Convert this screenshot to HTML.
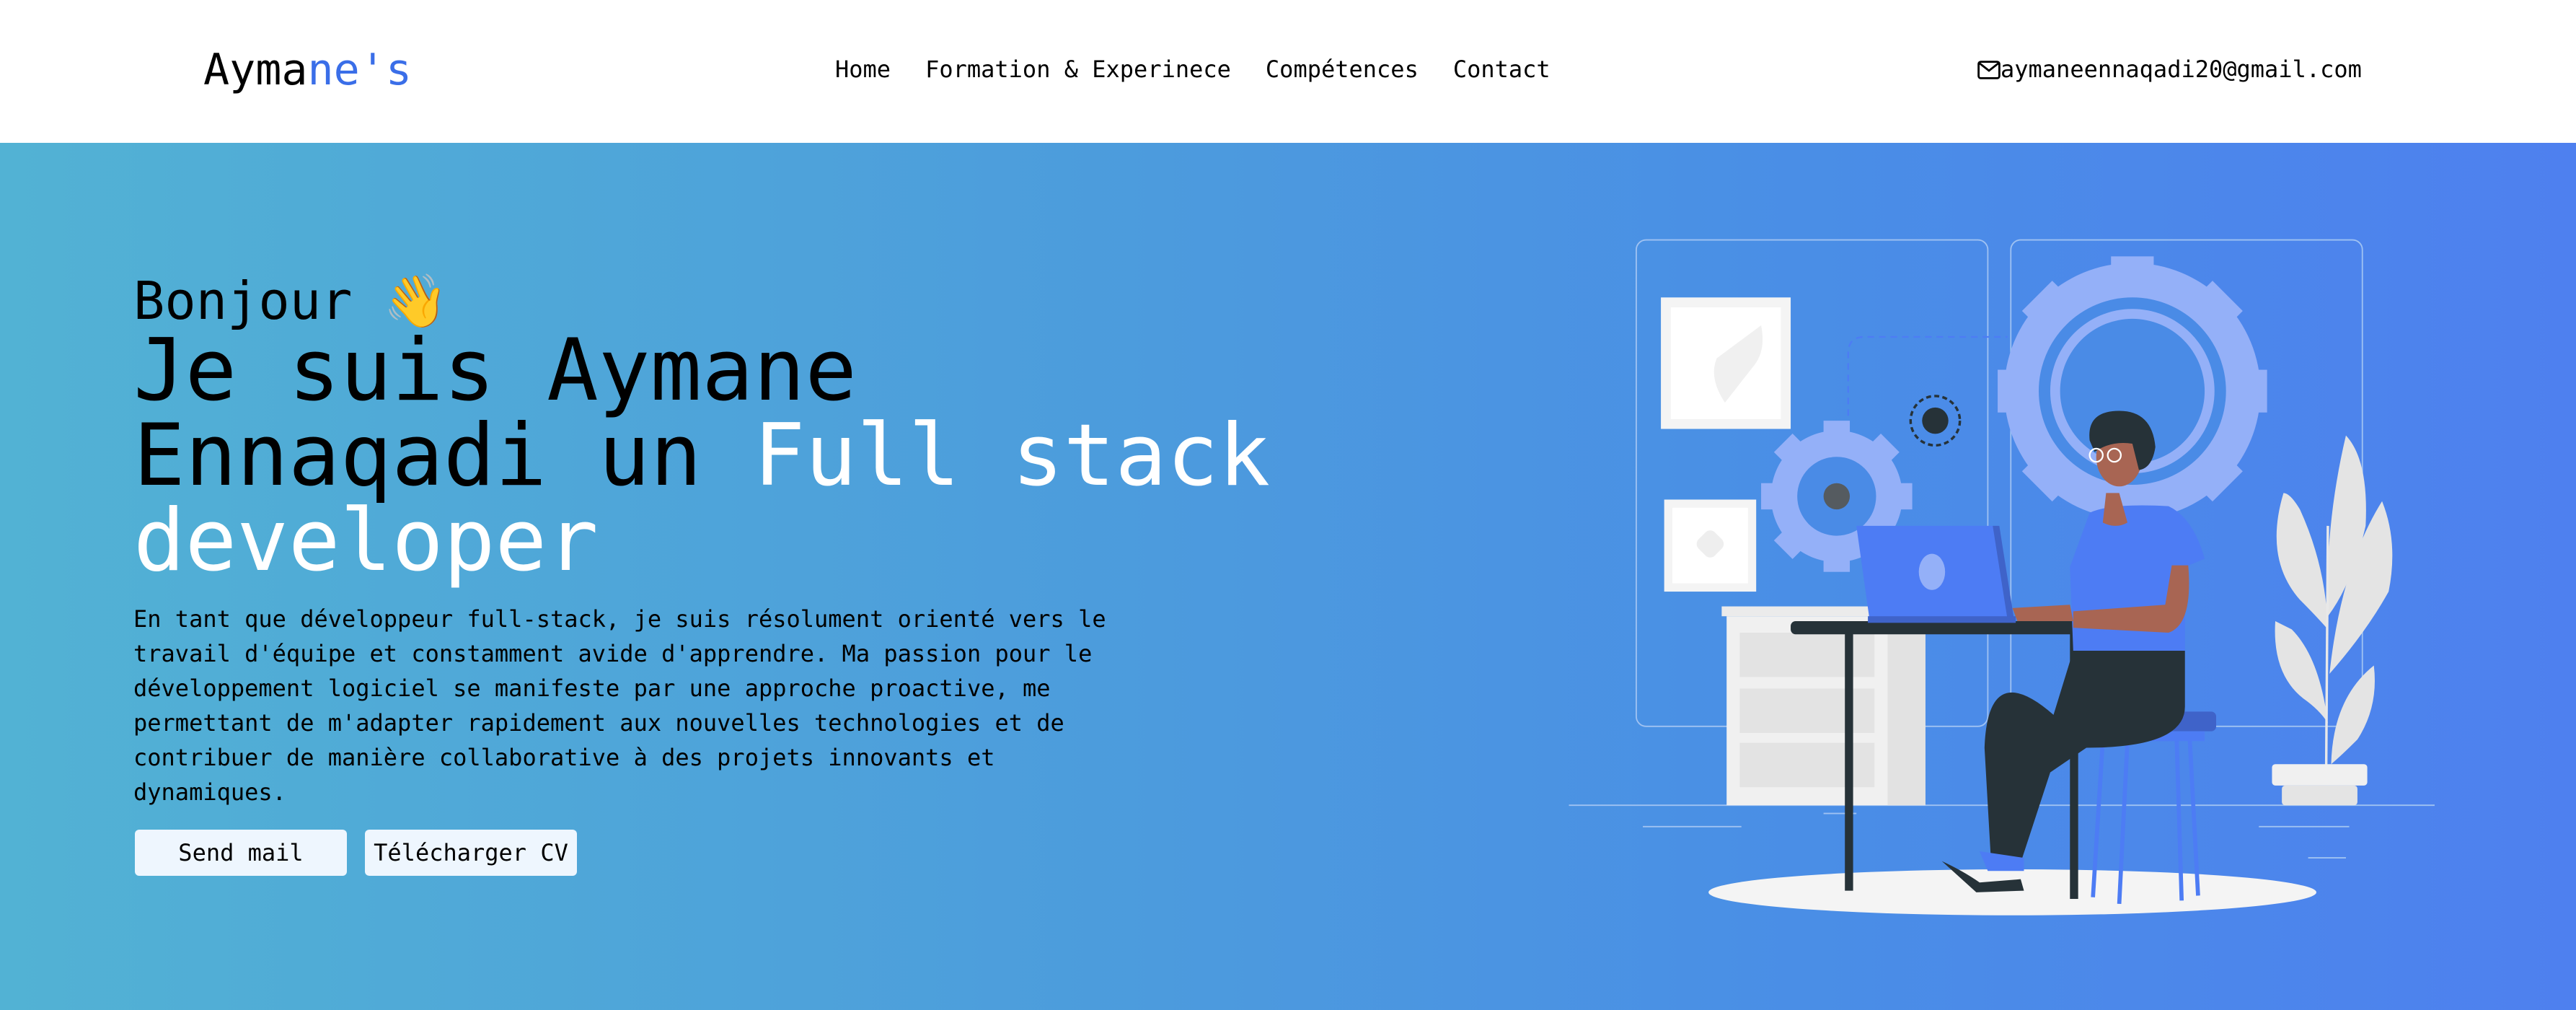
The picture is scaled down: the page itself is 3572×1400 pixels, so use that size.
<!DOCTYPE html>
<html><head><meta charset="utf-8"><style>
*{margin:0;padding:0;box-sizing:border-box}
body{width:3572px;height:1400px;overflow:hidden;font-family:"DejaVu Sans Mono","Liberation Mono",monospace;background:#fff;position:relative}
header{position:absolute;left:0;top:0;width:3572px;height:198px;background:#fff}
.logo{position:absolute;left:282px;top:62px;font-size:60px;color:#000;line-height:70px}
.logo span{color:#3a6ee8}
nav{position:absolute;left:1158px;top:76px;font-size:32px;line-height:40px}
nav a{color:#000;text-decoration:none;margin-right:48px}
.mail{position:absolute;left:2742px;top:76px;font-size:32px;line-height:40px;color:#000}
.hero{position:absolute;left:0;top:198px;width:3572px;height:1202px;background:linear-gradient(90deg,#52b2d4 0%,#4c9bdd 45%,#4a8ee6 70%,#4e80ef 100%)}
.b{position:absolute;left:185px;top:372px;font-size:72px;line-height:90px;color:#000}
h1{position:absolute;left:185px;top:455px;font-size:119px;line-height:118px;font-weight:normal;color:#000;width:1620px}
h1 span{color:#fff}
p{position:absolute;left:185px;top:834px;width:1420px;font-size:32px;line-height:48px;color:#000}
.btn{position:absolute;top:1150px;height:64px;width:294px;background:#eef6fe;border-radius:6px;font-size:32px;line-height:64px;text-align:center;color:#000}
svg.ill{position:absolute;left:0;top:0}
</style></head><body>
<header>
<div class="logo">Ayma<span>ne's</span></div>
<nav><a>Home</a><a>Formation &amp; Experinece</a><a>Compétences</a><a>Contact</a></nav>
<div class="mail"><svg width="32" height="26" viewBox="0 0 16 13" style="vertical-align:-3px"><rect x="0.8" y="0.8" width="14.4" height="11.4" rx="1.5" fill="none" stroke="#000" stroke-width="1.4"/><path d="M1 1.5 L8 7 L15 1.5" fill="none" stroke="#000" stroke-width="1.4"/></svg>aymaneennaqadi20@gmail.com</div>
</header>
<div class="hero"></div>
<div class="b">Bonjour 👋</div>
<h1>Je suis Aymane Ennaqadi un <span>Full stack developer</span></h1>
<p>En tant que développeur full-stack, je suis résolument orienté vers le travail d'équipe et constamment avide d'apprendre. Ma passion pour le développement logiciel se manifeste par une approche proactive, me permettant de m'adapter rapidement aux nouvelles technologies et de contribuer de manière collaborative à des projets innovants et dynamiques.</p>
<div class="btn" style="left:187px">Send mail</div>
<div class="btn" style="left:506px">Télécharger CV</div>

<svg class="ill" width="3572" height="1400" viewBox="0 0 1568 614.6">
<g fill="none" stroke="#9fc2f2" stroke-width="0.8">
<rect x="996" y="146" width="214" height="296" rx="6"/>
<rect x="1224" y="146" width="214" height="296" rx="6"/>
<line x1="955" y1="490" x2="1482" y2="490"/>
<line x1="1000" y1="503" x2="1060" y2="503"/>
<line x1="1110" y1="495" x2="1130" y2="495"/>
<line x1="1375" y1="503" x2="1430" y2="503"/>
<line x1="1405" y1="522" x2="1428" y2="522"/>
</g>
<path d="M1125 260 V215 Q1125 205 1135 205 H1222" fill="none" stroke="#4d7cf4" stroke-dasharray="4 3" stroke-width="1"/>
<g fill="#94b0f8">
<circle cx="1298" cy="238" r="78"/>
<rect x="1285" y="156" width="26" height="164"/>
<rect x="1285" y="156" width="26" height="164" transform="rotate(45 1298 238)"/>
<rect x="1285" y="156" width="26" height="164" transform="rotate(90 1298 238)"/>
<rect x="1285" y="156" width="26" height="164" transform="rotate(135 1298 238)"/>
</g>
<circle cx="1298" cy="238" r="57" fill="#4a8be6"/>
<circle cx="1298" cy="238" r="50" fill="#94b0f8"/>
<circle cx="1298" cy="238" r="44" fill="#4a8be6"/>
<g fill="#94b0f8">
<circle cx="1118" cy="302" r="40"/>
<rect x="1110" y="256" width="16" height="92"/>
<rect x="1110" y="256" width="16" height="92" transform="rotate(45 1118 302)"/>
<rect x="1110" y="256" width="16" height="92" transform="rotate(90 1118 302)"/>
<rect x="1110" y="256" width="16" height="92" transform="rotate(135 1118 302)"/>
</g>
<circle cx="1118" cy="302" r="24" fill="#4a8be6"/>
<circle cx="1118" cy="302" r="8" fill="#555b60"/>
<circle cx="1178" cy="256" r="15" fill="none" stroke="#263238" stroke-width="1.5" stroke-dasharray="3 2"/>
<circle cx="1178" cy="256" r="8" fill="#263238"/>
<rect x="1011" y="181" width="79" height="80" fill="#f4f4f4"/><rect x="1017" y="187" width="67" height="68" fill="#fff"/>
<path d="M1072 198 Q1075 213 1068 222 L1050 245 Q1040 230 1045 218 Z" fill="#f0f0f0"/>
<rect x="1013" y="304" width="56" height="56" fill="#f4f4f4"/><rect x="1018" y="309" width="46" height="46" fill="#fff"/>
<rect x="1034" y="324" width="14" height="14" rx="4" fill="#eee" transform="rotate(45 1041 331)"/>
<rect x="1048" y="369" width="110" height="6" fill="#ebebeb"/>
<rect x="1051" y="375" width="121" height="115" fill="#f0f0f0"/>
<rect x="1149" y="375" width="23" height="115" fill="#e2e2e2"/>
<rect x="1059" y="385" width="82" height="27" fill="#e3e3e3"/>
<rect x="1059" y="419" width="82" height="27" fill="#e3e3e3"/>
<rect x="1059" y="452" width="82" height="27" fill="#e3e3e3"/>
<ellipse cx="1225" cy="543" rx="185" ry="14" fill="#f4f4f4"/>
<g fill="#e4e4e4">
<path d="M1428 265 Q1442 280 1440 320 Q1432 355 1417 375 Q1415 320 1428 265Z"/>
<path d="M1390 300 Q1378 340 1400 365 Q1410 375 1417 383 Q1416 345 1400 310 Q1394 300 1390 300Z"/>
<path d="M1450 305 Q1460 330 1454 360 Q1440 385 1418 410 Q1425 345 1450 305Z"/>
<path d="M1385 378 Q1383 410 1402 425 Q1412 432 1417 440 Q1412 400 1395 383Z"/>
<path d="M1445 405 Q1448 430 1435 450 Q1425 460 1419 465 Q1420 425 1445 405Z"/>
</g>
<line x1="1417" y1="320" x2="1416" y2="466" stroke="#e8e8e8" stroke-width="1.5"/>
<rect x="1383" y="465" width="58" height="13" rx="2" fill="#f0f0f0"/>
<rect x="1389" y="478" width="46" height="12" rx="2" fill="#e4e4e4"/>
<rect x="1265" y="433" width="84" height="12" rx="3" fill="#3f63c9"/>
<rect x="1272" y="445" width="70" height="6" fill="#4d7cf4"/>
<g stroke="#4d7cf4" stroke-width="2.5">
<line x1="1280" y1="451" x2="1274" y2="546"/><line x1="1295" y1="451" x2="1290" y2="550"/>
<line x1="1325" y1="451" x2="1328" y2="548"/><line x1="1333" y1="451" x2="1338" y2="545"/>
</g>
<rect x="1090" y="378" width="208" height="8" rx="3" fill="#263238"/>
<rect x="1123" y="385" width="5" height="157" fill="#263238"/>
<rect x="1260" y="385" width="5" height="162" fill="#263238"/>
<path d="M1130 320 L1216 320 L1225 377 L1138 377Z" fill="#4d7cf4"/>
<path d="M1213 320 L1217 320 L1226 377 L1222 377Z" fill="#3f63c9"/>
<ellipse cx="1176" cy="348" rx="8" ry="11" fill="#94b0f8"/>
<rect x="1137" y="375" width="90" height="4" fill="#3f63c9"/>
<path d="M1250 435 Q1210 400 1208 455 L1212 525 L1230 525 L1248 470 L1270 455 Q1330 455 1330 430 L1330 396 L1262 396 Z" fill="#263238"/>
<path d="M1205 518 L1232 522 L1232 530 L1210 530Z" fill="#4d7cf4"/>
<path d="M1182 524 Q1195 530 1205 537 L1230 535 L1232 542 L1203 543 Z" fill="#263238"/>
<path d="M1272 312 Q1285 306 1320 308 Q1335 315 1342 340 L1330 345 L1330 396 L1262 396 L1260 345 Z" fill="#4d7cf4"/>
<path d="M1225 370 L1260 368 L1262 378 L1228 378Z" fill="#a86553"/>
<path d="M1322 344 L1332 344 Q1335 380 1320 385 L1262 382 L1262 372 L1318 368Z" fill="#a86553"/>
<path d="M1282 300 L1290 300 L1295 318 Q1288 322 1280 318Z" fill="#a86553"/>
<ellipse cx="1290" cy="278" rx="14" ry="18" fill="#a86553"/>
<path d="M1272 268 Q1270 250 1290 250 Q1310 250 1312 272 Q1310 285 1302 286 L1298 270 Q1285 268 1275 275Z" fill="#263238"/>
<circle cx="1276" cy="277" r="4" fill="none" stroke="#fff" stroke-width="1"/>
<circle cx="1287" cy="277" r="4" fill="none" stroke="#fff" stroke-width="1"/>
</svg>
</body></html>
